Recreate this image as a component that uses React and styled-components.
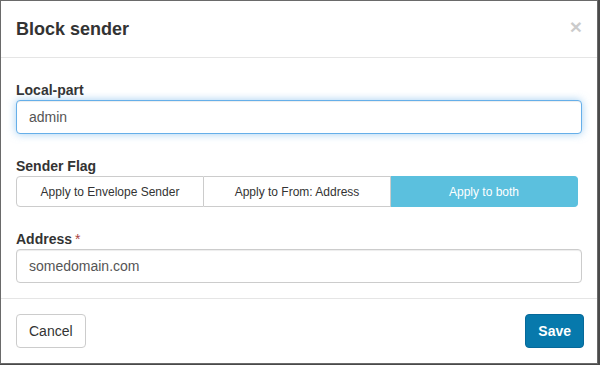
import React from 'react';
import styled, { createGlobalStyle } from 'styled-components';

const GlobalStyle = createGlobalStyle`
  html, body {
    margin: 0;
    padding: 0;
    background: #4a4a4a;
    font-family: "Liberation Sans", Arial, sans-serif;
    font-size: 14px;
    color: #333;
  }
  * { box-sizing: border-box; }
`

const Modal = styled.div`
  width: 598px;
  height: 364px;
  background: #fff;
  border: 1px solid #6a6a6a;
  display: flex;
  flex-direction: column;
`

const Header = styled.div`
  display: flex;
  align-items: center;
  justify-content: space-between;
  padding: 15px 15px 15px 15px;
  border-bottom: 1px solid #e5e5e5;
  height: 57px;
`

const Title = styled.h4`
  margin: 0;
  font-size: 18px;
  font-weight: bold;
  line-height: 26px;
  color: #333;
`

const Close = styled.button`
  border: none;
  background: none;
  padding: 0;
  margin-top: -6px;
  font-family: "Liberation Sans", Arial, sans-serif;
  font-size: 21px;
  font-weight: bold;
  line-height: 1;
  color: #000;
  opacity: 0.2;
  cursor: pointer;
`

const Body = styled.div`
  padding: 22px 15px 15px 15px;
  display: flex;
  flex-direction: column;
  gap: 22px;
`

const Group = styled.div`
  display: flex;
  flex-direction: column;
`

const Label = styled.label`
  font-weight: bold;
  font-size: 14px;
  line-height: 20px;
  color: #333;
`

const Required = styled.span`
  color: #a94442;
  font-weight: normal;
  margin-left: 3px;
`

const Input = styled.input`
  width: ${p => p.$width || '566px'};
  height: 34px;
  padding: 6px 12px;
  font-family: "Liberation Sans", Arial, sans-serif;
  font-size: 14px;
  color: #555;
  border: 1px solid ${p => (p.$focus ? '#66afe9' : '#ccc')};
  border-radius: 4px;
  outline: none;
  box-shadow: ${p =>
    p.$focus
      ? 'inset 0 1px 1px rgba(0,0,0,.075), 0 0 8px rgba(102,175,233,.6)'
      : 'inset 0 1px 1px rgba(0,0,0,.075)'};
`

const BtnGroup = styled.div`
  display: flex;
  width: 562px;
`

const FlagButton = styled.button`
  flex: 1;
  height: 31px;
  padding: 6px 12px;
  font-family: "Liberation Sans", Arial, sans-serif;
  font-size: 12px;
  color: ${p => (p.$active ? '#fff' : '#333')};
  background: ${p => (p.$active ? '#5bc0de' : '#fff')};
  border: 1px solid ${p => (p.$active ? '#5bc0de' : '#ccc')};
  border-left-width: ${p => (p.$first ? '1px' : '0')};
  border-radius: 0;
  &:first-child { border-radius: 4px 0 0 4px; }
  &:last-child { border-radius: 0 4px 4px 0; }
`

const Footer = styled.div`
  border-top: 1px solid #e5e5e5;
  padding: 15px 13px 15px 15px;
  display: flex;
  justify-content: space-between;
  align-items: center;
`

const Button = styled.button`
  height: 34px;
  padding: 6px 12px;
  font-family: "Liberation Sans", Arial, sans-serif;
  font-size: 14px;
  font-weight: ${p => (p.$primary ? 'bold' : 'normal')};
  color: ${p => (p.$primary ? '#fff' : '#333')};
  background: ${p => (p.$primary ? '#0779ac' : '#fff')};
  border: 1px solid ${p => (p.$primary ? '#06699a' : '#ccc')};
  border-radius: 4px;
  cursor: pointer;
`

const flags = ['Apply to Envelope Sender', 'Apply to From: Address', 'Apply to both'];

export default function App() {
  return (
    <>
      <GlobalStyle />
      <Modal>
        <Header>
          <Title>Block sender</Title>
          <Close>×</Close>
        </Header>
        <Body>
          <Group>
            <Label>Local-part</Label>
            <Input $focus defaultValue="admin" />
          </Group>
          <Group>
            <Label>Sender Flag</Label>
            <BtnGroup>
              {flags.map((f, i) => (
                <FlagButton key={f} $first={i === 0} $active={i === 2}>{f}</FlagButton>
              ))}
            </BtnGroup>
          </Group>
          <Group>
            <Label>Address<Required>*</Required></Label>
            <Input defaultValue="somedomain.com" />
          </Group>
        </Body>
        <Footer>
          <Button>Cancel</Button>
          <Button $primary>Save</Button>
        </Footer>
      </Modal>
    </>
  );
}
